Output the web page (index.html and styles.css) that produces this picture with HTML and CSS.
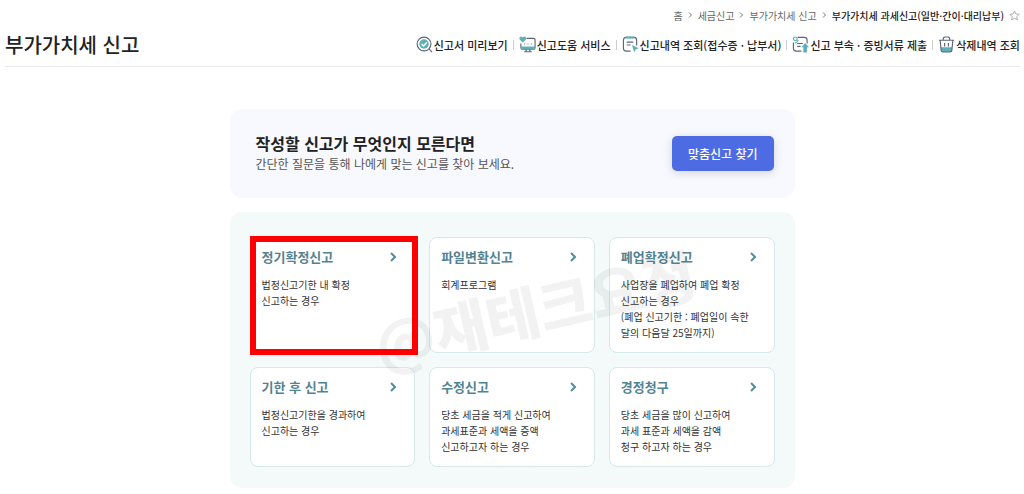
FILE: index.html
```html
<!DOCTYPE html>
<html lang="ko">
<head>
    <meta charset="UTF-8">
    <meta name="viewport" content="width=device-width, initial-scale=1.0">
    <title>부가가치세 신고</title>
    <link rel="stylesheet" href="styles.css">
</head>
<body>
<header class="page-header">
    <nav class="breadcrumb">
        <a href="#">홈</a>
        <svg class="crumb-arrow" viewBox="0 0 5 8"><path d="M1 1.5 3.5 4 1 6.5"/></svg>
        <a href="#">세금신고</a>
        <svg class="crumb-arrow" viewBox="0 0 5 8"><path d="M1 1.5 3.5 4 1 6.5"/></svg>
        <a href="#">부가가치세 신고</a>
        <svg class="crumb-arrow" viewBox="0 0 5 8"><path d="M1 1.5 3.5 4 1 6.5"/></svg>
        <a class="current" href="#">부가가치세 과세신고(일반·간이·대리납부)</a>
        <button class="favorite" type="button" aria-label="즐겨찾기">
            <svg viewBox="0 0 12 12"><path d="M6 1 7.5 4.3 11.2 4.7 8.4 7.1 9.2 10.8 6 8.9 2.8 10.8 3.6 7.1.8 4.7 4.5 4.3Z"/></svg>
        </button>
    </nav>
    <div class="title-row">
        <h1>부가가치세 신고</h1>
        <ul class="menu">
            <li><a href="#">
                <svg class="icon" viewBox="0 0 18 18">
                    <circle class="line" cx="8.5" cy="8.5" r="7.3"/>
                    <path class="line" d="m14 14 3 3"/>
                    <circle class="teal" cx="8.5" cy="8.5" r="5"/>
                    <path class="white-line" d="m6 8.5 2 2 3.4-3.7"/>
                </svg>신고서 미리보기</a></li>
            <li><a href="#">
                <svg class="icon" viewBox="0 0 18 18">
                    <path class="line" d="M8 2.5h7.5q1.5 0 1.5 1.5v8.500q0 1.500-1.500 1.500h-12Q2 14 2 12.500V8"/>
                    <path class="teal" d="M2 11h15v1.500q0 1.500-1.500 1.500h-12Q2 14 2 12.500Z"/>
                    <path class="line" d="M7.500 14v2.500M11.500 14v2.500M5.500 16.700h8"/>
                    <path class="teal" d="M4 7 .9 3.900C-.8 1.700 2.300-.7 4 1.500 5.700-.7 8.800 1.700 7.100 3.900Z"/>
                    <path class="line" d="M5.500 8.500h1M9 8.500h1M12.500 8.500h1"/>
                </svg>신고도움 서비스</a></li>
            <li><a href="#">
                <svg class="icon" viewBox="0 0 18 18">
                    <path class="line" d="M9 16H4.500Q1.500 16 1.500 13V4.500q0-3 3-3h8q3 0 3 3V10"/>
                    <path class="teal" d="M4 .5h9v2.300H4Z"/>
                    <path class="line" d="M5 6.500h7M5 9.500h4"/>
                    <path class="teal" d="m10.500 9.500 7 3.500-3 1.200-1.500 3Z"/>
                </svg>신고내역 조회(접수증 · 납부서)</a></li>
            <li><a href="#">
                <svg class="icon" viewBox="0 0 18 18">
                    <path class="line" d="M10 16H4.500Q1.500 16 1.500 13V7M6 1.500h7q3 0 3 3V8M5.500 8h6M5.500 11h3.500"/>
                    <circle class="teal-line" cx="3.500" cy="3" r="2"/>
                    <path class="teal-line" d="M3 7.500Q6 7 6.500 4"/>
                    <path class="teal" d="m14 7.500 4 4.500h-2v5.500h-4V12h-2Z"/>
                </svg>신고 부속 · 증빙서류 제출</a></li>
            <li><a href="#">
                <svg class="icon" viewBox="0 0 18 18">
                    <path class="teal" d="M3 12h12l-.5 3q-.2 2-2 2h-7q-1.800 0-2-2Z"/>
                    <path class="line" d="M1 4.500h16M5.500 4q0-3 2-3h3q2 0 2 3M2.300 5l1 10q.2 2 2 2h7.400q1.800 0 2-2l1-10M7 7.500V11M11 7.500V11"/>
                </svg>삭제내역 조회</a></li>
        </ul>
    </div>
</header>

<main class="content">
    <section class="guide">
        <div>
            <h2>작성할 신고가 무엇인지 모른다면</h2>
            <p>간단한 질문을 통해 나에게 맞는 신고를 찾아 보세요.</p>
        </div>
        <button class="find-button" type="button">맞춤신고 찾기</button>
    </section>

    <section class="reports">
        <a class="card selected" href="#">
            <h3>정기확정신고 <svg class="arrow" viewBox="0 0 6 10"><path d="m1 1 4 4-4 4"/></svg></h3>
            <p>법정신고기한 내 확정<br>신고하는 경우</p>
        </a>
        <a class="card" href="#">
            <h3>파일변환신고 <svg class="arrow" viewBox="0 0 6 10"><path d="m1 1 4 4-4 4"/></svg></h3>
            <p>회계프로그램</p>
        </a>
        <a class="card" href="#">
            <h3>폐업확정신고 <svg class="arrow" viewBox="0 0 6 10"><path d="m1 1 4 4-4 4"/></svg></h3>
            <p>사업장을 폐업하여 폐업 확정<br>신고하는 경우<br>(폐업 신고기한 : 폐업일이 속한<br>달의 다음달 25일까지)</p>
        </a>
        <a class="card" href="#">
            <h3>기한 후 신고 <svg class="arrow" viewBox="0 0 6 10"><path d="m1 1 4 4-4 4"/></svg></h3>
            <p>법정신고기한을 경과하여<br>신고하는 경우</p>
        </a>
        <a class="card" href="#">
            <h3>수정신고 <svg class="arrow" viewBox="0 0 6 10"><path d="m1 1 4 4-4 4"/></svg></h3>
            <p>당초 세금을 적게 신고하여<br>과세표준과 세액을 증액<br>신고하고자 하는 경우</p>
        </a>
        <a class="card" href="#">
            <h3>경정청구 <svg class="arrow" viewBox="0 0 6 10"><path d="m1 1 4 4-4 4"/></svg></h3>
            <p>당초 세금을 많이 신고하여<br>과세 표준과 세액을 감액<br>청구 하고자 하는 경우</p>
        </a>
        <div class="watermark">@재테크요정</div>
    </section>
</main>
</body>
</html>
```
FILE: styles.css
```css
* {
    box-sizing: border-box;
}
body {
    margin: 0;
    background-color: #fff;
    color: #222;
    font-family: "Noto Sans CJK KR", sans-serif;
    font-size: 10px;
}
h1, h2, h3, p, ul {
    margin: 0;
    padding: 0;
}
a {
    color: inherit;
    text-decoration: none;
}
button {
    border: none;
    font-family: inherit;
    cursor: pointer;
}
svg {
    flex: none;
    fill: none;
}

/* header */
.page-header {
    margin: 0 4px 0 5px;
    padding-top: 7px;
    border-bottom: 1px solid #e8e8e8;
}
.breadcrumb {
    display: flex;
    justify-content: flex-end;
    align-items: center;
    gap: 5px;
    height: 16px;
    color: #666;
}
.breadcrumb .current {
    color: #222;
    font-weight: 500;
}
.crumb-arrow {
    width: 5px;
    height: 8px;
    stroke: #777;
}
.favorite {
    display: flex;
    padding: 0;
    background: none;
}
.favorite svg {
    width: 11px;
    height: 11px;
    stroke: #aaa;
}
.title-row {
    display: flex;
    justify-content: space-between;
    align-items: center;
    height: 43px;
}
.title-row h1 {
    font-size: 20px;
    font-weight: 500;
    line-height: 30px;
}
.menu {
    display: flex;
    list-style: none;
}
.menu li {
    display: flex;
    align-items: center;
}
.menu li + li::before {
    content: "";
    width: 1px;
    height: 10px;
    margin: 0 5px;
    background-color: #ccc;
}
.menu a {
    display: flex;
    align-items: center;
    gap: 1px;
    font-size: 11px;
    font-weight: 500;
    line-height: 18px;
}
.icon {
    width: 17px;
    height: 17px;
}
.line {
    stroke: #5d6478;
    stroke-width: 1.2;
}
.teal {
    fill: #5fb0b7;
}
.teal-line {
    stroke: #5fb0b7;
    stroke-width: 1.2;
}
.white-line {
    stroke: #fff;
    stroke-width: 1.5;
}

/* content */
.content {
    max-width: 565px;
    margin: 42px auto 0;
}
.guide {
    display: flex;
    justify-content: space-between;
    align-items: center;
    padding: 23px 21px 24px 26px;
    border-radius: 12px;
    background-color: #f8f9fe;
}
.guide h2 {
    font-size: 16px;
    font-weight: 700;
    line-height: 22px;
}
.guide p {
    color: #555;
    font-size: 12px;
    line-height: 20px;
}
.find-button {
    padding: 8px 16px;
    border-radius: 5px;
    background-color: #4d6be2;
    box-shadow: 0 2px 10px rgba(0, 0, 0, 0.15);
    color: #fff;
    font-size: 12px;
    font-weight: 500;
    line-height: 19px;
}
.reports {
    position: relative;
    display: grid;
    grid-template-columns: repeat(3, 1fr);
    gap: 14px;
    margin-top: 14px;
    padding: 25px 20px 21px;
    border-radius: 12px;
    background-color: #f4fafa;
}
.card {
    position: relative;
    padding: 9px 11px 11px;
    border: 1px solid #d5e8ea;
    border-radius: 8px;
    background-color: #fff;
}
.card h3 {
    display: flex;
    justify-content: space-between;
    align-items: center;
    margin-bottom: 10px;
    padding-right: 7px;
    color: #528391;
    font-size: 13px;
    font-weight: 700;
    line-height: 20px;
}
.card p {
    color: #333;
    line-height: 16px;
}
.arrow {
    width: 6px;
    height: 10px;
    stroke: #528f9c;
    stroke-width: 2;
}
.selected::after {
    content: "";
    position: absolute;
    z-index: 2;
    inset: -2px -4px -3px -1px;
    border: 6px solid #f00;
}
.watermark {
    position: absolute;
    z-index: 1;
    top: 56px;
    left: 141px;
    color: rgba(0, 0, 0, 0.05);
    font-size: 58px;
    font-weight: 900;
    line-height: 80px;
    white-space: nowrap;
    transform: rotate(-13deg);
    pointer-events: none;
}
```
